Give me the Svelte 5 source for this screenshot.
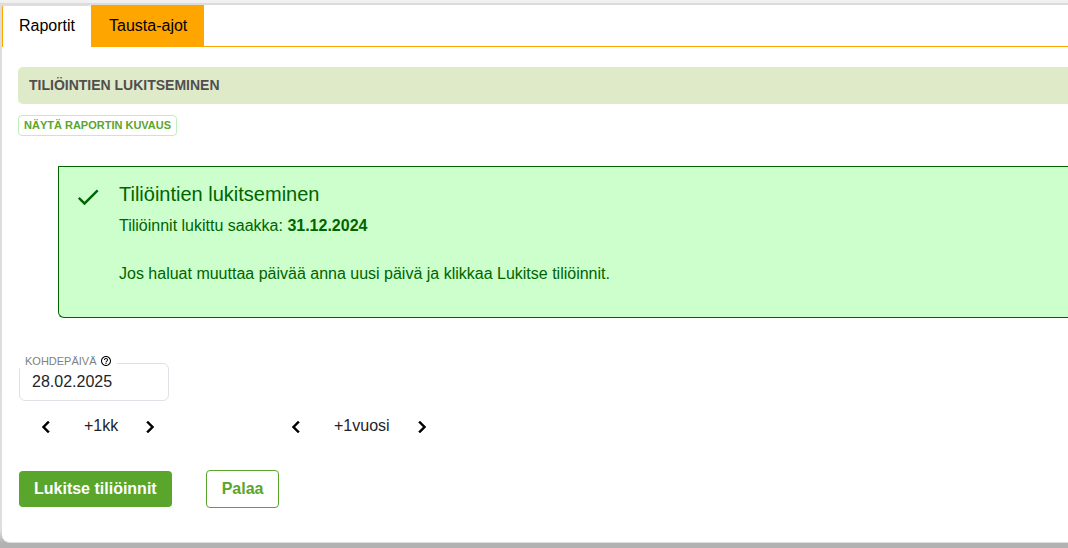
<script>
  let date = $state('28.02.2025');
  const steppers = [
    { label: '+1kk', name: 'kuukausi' },
    { label: '+1vuosi', name: 'vuosi' }
  ];
</script>

<main class="panel">
  <nav class="tabs">
    <button type="button" class="tab active">Raportit</button>
    <button type="button" class="tab">Tausta-ajot</button>
  </nav>

  <section class="content">
    <h1>TILIÖINTIEN LUKITSEMINEN</h1>
    <button type="button" class="describe">NÄYTÄ RAPORTIN KUVAUS</button>

    <div class="notice">
      <svg width="28" height="28" viewBox="0 0 24 24" aria-hidden="true">
        <path d="M9 16.17 4.83 12l-1.42 1.41L9 19 21 7l-1.41-1.41z" />
      </svg>
      <div>
        <h2>Tiliöintien lukitseminen</h2>
        <p>Tiliöinnit lukittu saakka: <strong>31.12.2024</strong></p>
        <p class="hint">Jos haluat muuttaa päivää anna uusi päivä ja klikkaa Lukitse tiliöinnit.</p>
      </div>
    </div>

    <div class="field">
      <label for="target-date">
        KOHDEPÄIVÄ
        <svg width="12" height="12" viewBox="0 0 24 24" aria-hidden="true">
          <path d="M11 18h2v-2h-2v2zm1-16C6.48 2 2 6.48 2 12s4.48 10 10 10 10-4.48 10-10S17.52 2 12 2zm0 18c-4.41 0-8-3.59-8-8s3.59-8 8-8 8 3.59 8 8-3.59 8-8 8zm0-14c-2.21 0-4 1.79-4 4h2c0-1.1.9-2 2-2s2 .9 2 2c0 2-3 1.75-3 5h2c0-2.25 3-2.5 3-5 0-2.21-1.79-4-4-4z" />
        </svg>
      </label>
      <input id="target-date" type="text" bind:value={date} />
    </div>

    <div class="steppers">
      {#each steppers as step}
        <div class="stepper">
          <button type="button" aria-label="Edellinen {step.name}">
            <svg width="24" height="24" viewBox="0 0 24 24" aria-hidden="true">
              <path d="M15.41 7.41 14 6l-6 6 6 6 1.41-1.41L10.83 12z" />
            </svg>
          </button>
          <span>{step.label}</span>
          <button type="button" aria-label="Seuraava {step.name}">
            <svg width="24" height="24" viewBox="0 0 24 24" aria-hidden="true">
              <path d="M10 6 8.59 7.41 13.17 12l-4.58 4.59L10 18l6-6z" />
            </svg>
          </button>
        </div>
      {/each}
    </div>

    <div class="actions">
      <button type="button" class="primary">Lukitse tiliöinnit</button>
      <button type="button" class="secondary">Palaa</button>
    </div>
  </section>
</main>

<style>
  :global(body) {
    background: linear-gradient(#f2f2f2 0, #eeeeee 3px, #dcdcdc 3px, #dcdcdc 8px, #dedede 530px, #b2b2b2 543px);
    background-repeat: no-repeat;
    background-color: #b2b2b2;
    font-family: "Liberation Sans", Arial, sans-serif;
    font-size: 16px;
    color: #212529;
  }

  button,
  input {
    font: inherit;
    margin: 0;
  }

  button {
    cursor: pointer;
  }

  .panel {
    margin: 5px 0 5px 2px;
    background: #fff;
    border-bottom: 1px solid #dedede;
    border-radius: 4px 0 0 8px;
  }

  .tabs {
    display: flex;
    border-bottom: 1px solid #ffa500;
  }

  .tab {
    height: 41px;
    padding: 0 17px 0 18px;
    border: 0;
    background: #ffa500;
    color: #000;
  }

  .tab.active {
    height: 42px;
    margin-bottom: -1px;
    padding: 0 16px 2px;
    border-left: 1px solid #ffa500;
    border-top: 1px solid #c8f0c8;
    border-radius: 3px 3px 0 0;
    background: #fff;
  }

  .content {
    padding: 20px 0 34px 16px;
  }

  h1 {
    margin: 0;
    padding: 0 11px;
    border-radius: 5px 0 0 5px;
    background: #dfeac8;
    color: #4f4f4f;
    font-size: 14px;
    line-height: 37px;
  }

  .describe {
    display: block;
    margin-top: 11px;
    padding: 0 5px;
    border: 1px solid #bdf0bd;
    border-radius: 4px;
    background: #fff;
    color: #5aa52c;
    font-size: 11px;
    font-weight: bold;
    line-height: 19px;
  }

  .notice {
    display: flex;
    gap: 17px;
    margin: 30px 0 0 40px;
    padding: 16px 15px 31px;
    border: 1px solid #006400;
    border-right: 0;
    border-radius: 0 0 0 6px;
    background: #ccffcc;
    color: #006400;
  }

  .notice svg {
    flex: none;
    fill: currentColor;
  }

  h2 {
    margin: 0 0 9px;
    font-size: 20px;
    font-weight: normal;
    line-height: 22px;
  }

  p {
    margin: 0;
    line-height: 24px;
  }

  .hint {
    margin-top: 24px;
  }

  .field {
    position: relative;
    width: 150px;
    margin: 45px 0 0 1px;
  }

  .field label {
    position: absolute;
    top: -9px;
    left: 0;
    display: flex;
    align-items: center;
    gap: 3px;
    padding: 0 5px 0 6px;
    background: #fff;
    color: #808080;
    font-size: 11px;
    line-height: 14px;
  }

  .field svg {
    fill: #000;
  }

  .field input {
    display: block;
    box-sizing: border-box;
    width: 100%;
    height: 38px;
    padding: 0 12px;
    border: 1px solid #dee2e6;
    border-radius: 6px;
    background: #fff;
    color: #212529;
  }

  .steppers {
    display: grid;
    grid-template-columns: 250px 250px;
    margin: 14px 0 0 16px;
  }

  .stepper {
    display: flex;
    align-items: flex-start;
  }

  .stepper span {
    margin: 0 20px 0 26px;
    line-height: 22px;
  }

  .stepper button {
    display: flex;
    padding: 0;
    border: 0;
    background: none;
  }

  .stepper svg {
    stroke: #000;
    stroke-width: 0.5;
  }

  .actions {
    display: flex;
    align-items: center;
    gap: 34px;
    margin: 31px 0 0 1px;
  }

  .actions button {
    border-radius: 4px;
    font-weight: bold;
    line-height: 36px;
  }

  .primary {
    padding: 0 15px;
    border: 0;
    background: #5aa52c;
    color: #fff;
  }

  .secondary {
    padding: 0 15px;
    border: 1px solid #5aa52c;
    background: #fff;
    color: #5aa52c;
  }
</style>
